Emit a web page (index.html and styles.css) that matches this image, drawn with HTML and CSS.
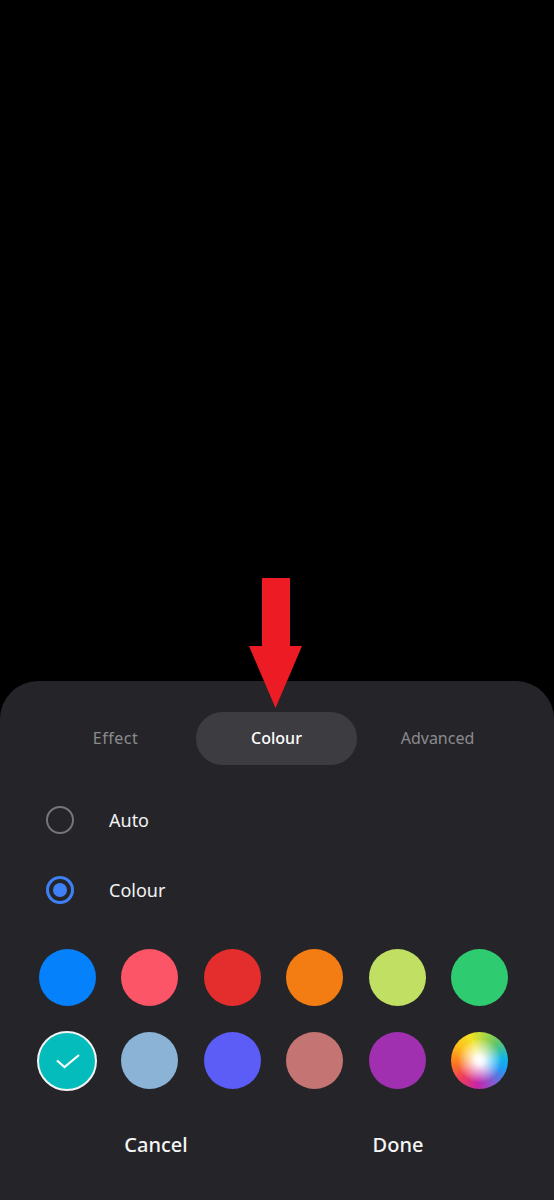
FILE: index.html
```html
<!DOCTYPE html>
<html lang="en">
<head>
<meta charset="utf-8">
<title>Colour</title>
<link rel="stylesheet" href="styles.css">
</head>
<body>
<main class="screen">
  <section class="sheet">
    <nav class="tabs">
      <span class="tab">Effect</span>
      <span class="tab tab-active">Colour</span>
      <span class="tab">Advanced</span>
    </nav>
    <div class="options">
      <div class="option"><span class="radio"></span><span class="option-label">Auto</span></div>
      <div class="option"><span class="radio radio-on"></span><span class="option-label">Colour</span></div>
    </div>
    <div class="swatches">
      <span class="swatch c-blue"></span>
      <span class="swatch c-pink"></span>
      <span class="swatch c-red"></span>
      <span class="swatch c-orange"></span>
      <span class="swatch c-lime"></span>
      <span class="swatch c-green"></span>
      <span class="swatch c-teal">
        <svg class="check" viewBox="0 0 26 18" width="26" height="18"><path d="M2 8.5 L9.5 15 L24 3" fill="none" stroke="#fff" stroke-width="2.2"/></svg>
      </span>
      <span class="swatch c-sky"></span>
      <span class="swatch c-indigo"></span>
      <span class="swatch c-rose"></span>
      <span class="swatch c-purple"></span>
      <span class="swatch c-wheel"></span>
    </div>
    <div class="actions">
      <span class="action">Cancel</span>
      <span class="action">Done</span>
    </div>
  </section>
  <svg class="arrow" viewBox="0 0 53 130" width="53" height="130"><path d="M13 0 H41 V68 H53 L26.5 130 L0 68 H13 Z" fill="#ed1c24"/></svg>
</main>
</body>
</html>
```
FILE: styles.css
```css
* { box-sizing: border-box; }
html, body { margin: 0; padding: 0; background: #000; }
.screen {
  position: relative;
  width: 554px;
  height: 1200px;
  display: flex;
  flex-direction: column;
  justify-content: flex-end;
  font-family: "Noto Sans", "Open Sans", sans-serif;
  overflow: hidden;
}
.sheet {
  height: 519px;
  background: #252529;
  border-radius: 38px 38px 0 0;
  padding-top: 31px;
}
.tabs {
  display: grid;
  grid-template-columns: repeat(3, 161px);
  justify-content: center;
  height: 53px;
  padding-right: 1px;
}
.tab {
  display: flex;
  align-items: center;
  justify-content: center;
  font-size: 16px;
  color: #8b8b8e;
  border-radius: 27px;
  padding-bottom: 1px;
}
.tab:first-child { letter-spacing: .5px; }
.tab-active { background: #3d3d41; color: #fff; font-weight: 500; }
.options { margin-top: 20px; padding-left: 46px; }
.option { display: flex; align-items: center; height: 70px; }
.radio {
  width: 28px;
  height: 28px;
  border-radius: 50%;
  border: 2px solid #767678;
  flex: none;
  display: flex;
  align-items: center;
  justify-content: center;
}
.radio-on { border: 3px solid #3f80f6; }
.radio-on::after {
  content: "";
  width: 14px;
  height: 14px;
  border-radius: 50%;
  background: #3f80f6;
}
.option-label { margin-left: 35px; font-size: 18px; color: #f2f2f2; }
.swatches {
  margin-top: 11px;
  padding: 0 33px 0 26px;
  display: grid;
  grid-template-columns: repeat(6, 1fr);
  grid-auto-rows: 83px;
  place-items: center;
}
.swatch { width: 57px; height: 57px; border-radius: 50%; display: flex; align-items: center; justify-content: center; }
.c-blue { background: #0581fb; }
.c-pink { background: #fd5568; }
.c-red { background: #e32e2d; }
.c-orange { background: #f47d13; }
.c-lime { background: #c0df63; }
.c-green { background: #2fcb70; }
.c-teal { background: #04bcbc; width: 60px; height: 60px; border: 2px solid #f4f4f4; }
.c-sky { background: #8ab3d5; }
.c-indigo { background: #5c5cf6; }
.c-rose { background: #c47573; }
.c-purple { background: #a030b0; }
.c-wheel {
  background:
    radial-gradient(circle at 50% 50%, #fff 0, rgba(255,255,255,.9) 12%, rgba(255,255,255,0) 55%),
    conic-gradient(from 0deg, #c6dc3a 0deg, #5fc56a 45deg, #12b5e8 85deg, #1e9bf5 110deg, #8a58d0 150deg, #c526a8 185deg, #ee3d5c 225deg, #fb7a1e 265deg, #ffc01a 305deg, #f2e125 340deg, #c6dc3a 360deg);
}
.check { display: block; margin-left: 1px; }
.actions {
  margin-top: 24px;
  display: grid;
  grid-template-columns: repeat(2, 242px);
  justify-content: center;
}
.action { text-align: center; font-size: 20px; font-weight: 500; color: #f6f6f6; line-height: 38px; padding-bottom: 2px; }
.arrow { position: absolute; left: 249px; top: 578px; }
```
